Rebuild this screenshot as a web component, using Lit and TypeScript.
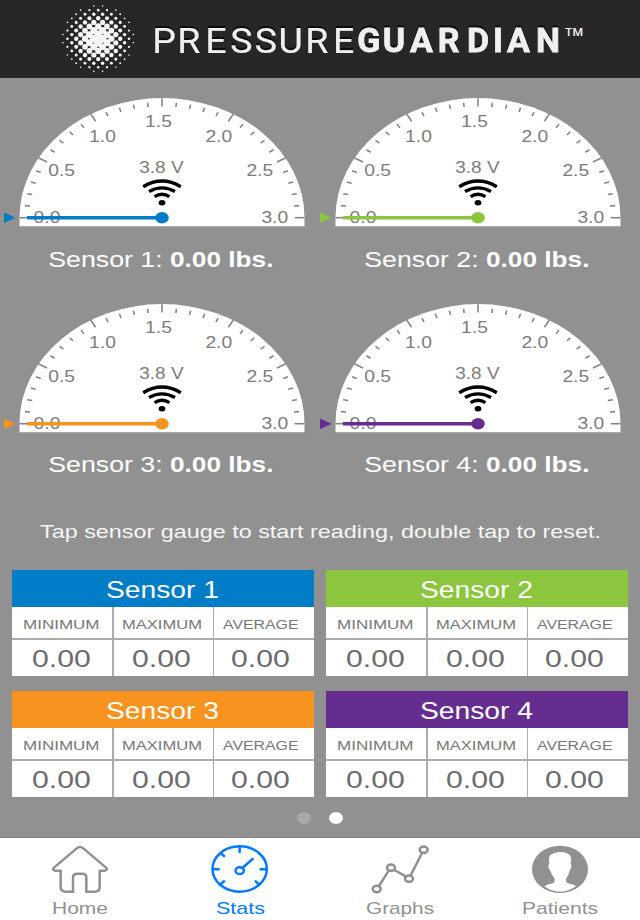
import { LitElement, html, svg, css } from "lit";
import { customElement, property } from "lit/decorators.js";

type Sensor = { id: number; color: string };

const SENSORS: Sensor[] = [
  { id: 1, color: "#007dc6" },
  { id: 2, color: "#8cc63e" },
  { id: 3, color: "#f7931e" },
  { id: 4, color: "#662d91" },
];

/* One line of extended-width text; `base` is the baseline inside the box. */
const wide = (text: string, size: number, width: number, height: number, base: number) => html`
  <svg class="wide" width=${width} height=${height}>
    <text x="0" y=${base} font-size=${size} textLength=${width} lengthAdjust="spacingAndGlyphs">${text}</text>
  </svg>`;

const wideCss = css`
  .wide { display: block; overflow: visible; flex: none; }
  .wide text { fill: currentColor; }
`;

@customElement("brand-header")
class BrandHeader extends LitElement {
  static styles = css`
    :host { display: flex; height: 78px; background: #272727; }
    svg { display: block; }
    .dots { fill: #f7f5f6; }
    text { font-family: Roboto, sans-serif; fill: #f3eff1; }
    .words { filter: drop-shadow(0 -1.5px 0 #0c0c0c); }
    .thin { font-weight: 400; stroke: #f3eff1; stroke-width: 0.2; }
    .heavy { font-weight: 700; stroke: #f3eff1; stroke-width: 0.8; }
  `;
  render() {
    const dots = [];
    for (let j = -8; j <= 8; j++)
      for (let i = -8; i <= 8; i++) {
        const d = Math.hypot(i, j);
        if ((i + j) % 2 === 0 || d > 8.1) continue;
        dots.push(svg`<circle cx=${98.2 + i * 4.4} cy=${38.7 + j * 4.08} r=${(4.5 - d * 0.46).toFixed(2)} />`);
      }
    const k = 1.09;
    const thinX = [152.2, 177.2, 205.2, 230.2, 254.8, 278.6, 305.2, 333].map((x) => (x / k).toFixed(2)).join(" ");
    return html`<svg width="640" height="78">
      <g class="dots">${dots}<circle cx="98.2" cy="38.7" r="3" /></g>
      <g class="words">
        <text class="thin" transform="scale(${k} 1)" y="52.6" font-size="34.4" x=${thinX}>PRESSURE</text>
        <text class="heavy" y="52.4" font-size="34" x="357.2 382.8 410 437.8 467 493 507 536">GUARDIAN</text>
      </g>
      <text x="565" y="36" font-size="11" font-weight="500" textLength="18" lengthAdjust="spacingAndGlyphs">TM</text>
    </svg>`;
  }
}

@customElement("sensor-gauge")
class SensorGauge extends LitElement {
  @property({ attribute: false }) sensor!: Sensor;
  static styles = css`
    :host { display: block; }
    svg { display: block; overflow: visible; }
    .face { fill: #fff; }
    .ticks { stroke: #858585; stroke-width: 1.6; }
    .scale { fill: #7c7c7c; font-size: 15.8px; }
    .wifi { fill: none; stroke: #000; stroke-width: 3.4; }
    .reading { color: #fff; margin-top: 6px; }
    .reading text { fill: #fff; font-size: 21.4px; }
    .bold { font-weight: 700; }
    :host(.lower) .reading { margin-top: 4.3px; }
  `;
  render() {
    const c = this.sensor.color;
    const ticks = [];
    for (let k = 0; k <= 30; k++) {
      const a = (k * 6 * Math.PI) / 180;
      const out = k % 5 ? 115.6 : 119.5;
      const x = -Math.cos(a) * 1.1925, y = -Math.sin(a);
      ticks.push(svg`<line x1=${x * 111.3} y1=${y * 111.3} x2=${x * out} y2=${y * out} />`);
    }
    const marks: [string, number, number][] = [
      ["0.0", -128.4, 5.4], ["0.5", -113.8, -41.8], ["1.0", -72.9, -75.8], ["1.5", -16.9, -91],
      ["2.0", 43.4, -75.8], ["2.5", 84.4, -41.8], ["3.0", 99.4, 5.4],
    ];
    return html`
      <svg width="316" height="160">
        <g transform="translate(162 139.7)">
          <path class="face" d="M-142.5 8.6V0A142.5 119.6 0 0 1 142.5 0V8.6Z" />
          <g class="ticks">${ticks}</g>
          <g class="scale">
            ${marks.map(([t, x, y]) => svg`<text x=${x} y=${y} textLength="26.8" lengthAdjust="spacingAndGlyphs">${t}</text>`)}
            <text x="-22.8" y="-45" textLength="44.4" lengthAdjust="spacingAndGlyphs">3.8 V</text>
          </g>
          <g class="wifi">
            <path d="M-18.8-31Q0-42.4 18.8-31" />
            <path d="M-13-26.1Q0-33.5 13-26.1" />
            <path d="M-7.4-21.1Q0-26 7.4-21.1" />
          </g>
          <ellipse cy="-15" rx="3.4" ry="2.7" />
          <g fill=${c}>
            <path d="M-158-5.3L-146.4 0L-158 5.3Z" />
            <path d="M-135-1.7H0V1.7H-135Z" />
            <ellipse rx="6.8" ry="5.7" />
          </g>
        </g>
      </svg>
      <svg class="reading" width="316" height="30">
        <text x="48.2" y="23" textLength="114.5" lengthAdjust="spacingAndGlyphs">Sensor ${this.sensor.id}:</text>
        <text class="bold" x="170" y="23" textLength="103.5" lengthAdjust="spacingAndGlyphs">0.00 lbs.</text>
      </svg>`;
  }
}

@customElement("sensor-table")
class SensorTable extends LitElement {
  @property({ attribute: false }) sensor!: Sensor;
  static styles = [wideCss, css`
    :host { display: block; width: 302px; }
    .title { height: 37px; display: flex; justify-content: center; color: #fff; padding-right: 2px; }
    .grid {
      display: grid; grid-template-columns: 99.8px 99px 1fr; grid-template-rows: 31.2px 36px;
      gap: 1.8px; background: #acacac; color: #777;
    }
    .cell { background: #fff; display: flex; justify-content: center; box-sizing: border-box; padding-right: 1px; }
    .cell.mid { padding-right: 3px; }
    .cell.end { padding-right: 7px; }
    .value { color: #6c6c6e; }
  `];
  render() {
    const cls = ["", "mid", "end"];
    return html`
      <div class="title" style="background:${this.sensor.color}">${wide(`Sensor ${this.sensor.id}`, 24.2, 113, 37, 28.3)}</div>
      <div class="grid">
        ${["MINIMUM", "MAXIMUM", "AVERAGE"].map((t, i) => html`<div class="cell ${cls[i]}">${wide(t, 13.4, [76.5, 80, 75.5][i], 31, 22.3)}</div>`)}
        ${cls.map((k) => html`<div class="cell value ${k}">${wide("0.00", 24.8, 58.8, 36, 26.6)}</div>`)}
      </div>`;
  }
}

@customElement("tab-bar")
class TabBar extends LitElement {
  static styles = [wideCss, css`
    :host { display: grid; grid-template-columns: repeat(4, 160px); height: 82px; background: #fff; }
    .tab { display: flex; flex-direction: column; align-items: center; padding-top: 6px; color: #919191; }
    .tab.on { color: #007aff; }
    .icon { display: block; fill: none; stroke: currentColor; stroke-width: 7.5; stroke-linecap: round; stroke-linejoin: round; }
    .solid { fill: currentColor; stroke: none; }
    .bust { fill: #fff; stroke: none; }
  `];
  render() {
    const icon = (x: number, body: unknown) => html`<svg class="icon" width="60" height="51" viewBox="${x} 42 180 153">${body}</svg>`;
    const home = svg`<path d="M220 185H198Q182 185 182 172V122H166Q154 120 163 112L229 56Q240 46 251 56L317 112Q326 120 314 122H299V172Q299 185 284 185H259V143Q259 131.5 247 131.5H232Q219 131.5 219 143V185Z" />`;
    const stats = svg`<ellipse cx="718" cy="117" rx="81.5" ry="68" />
      <path d="M718 50V66M637 118H655M781 118H799M661 70L671 78M659 164L671 154M777 164L766 154M726 114L757 87" />
      <ellipse cx="718" cy="122" rx="12.5" ry="10" />`;
    const graphs = svg`<ellipse cx="172" cy="177" rx="12" ry="9.5" /><ellipse cx="215" cy="113" rx="12" ry="9.5" />
      <ellipse cx="269" cy="146" rx="12" ry="9.5" /><ellipse cx="313" cy="59" rx="12" ry="9.5" />
      <path d="M179 168L208 122M225 120L259 139M274 136L308 69" />`;
    const patients = svg`<ellipse class="solid" cx="720" cy="118" rx="84" ry="71" />
      <path class="bust" d="M673 169Q684 162 700 160Q706 155 704 146Q695 134 691 122Q686 119 685 107Q686 103 688 102Q684 82 692 74Q704 66 720 66Q740 66 749 75Q756 85 752 102Q755 104 754 109Q752 120 749 122Q745 137 738 147Q737 156 743 160Q758 162 769 168Q746 185 720 185Q694 185 673 169Z" />`;
    return html`
      <div class="tab">${icon(150, home)}${wide("Home", 17, 56, 22, 19)}</div>
      <div class="tab on">${icon(629, stats)}${wide("Stats", 17, 49, 22, 19)}</div>
      <div class="tab">${icon(152, graphs)}${wide("Graphs", 17, 68, 22, 19)}</div>
      <div class="tab">${icon(630, patients)}${wide("Patients", 17, 76, 22, 19)}</div>`;
  }
}

@customElement("app-root")
class AppRoot extends LitElement {
  static styles = [wideCss, css`
    :host {
      display: flex; flex-direction: column; width: 640px; height: 920px; overflow: hidden;
      background: #919191; font-family: "Liberation Sans", Arial, sans-serif;
    }
    .body { height: 760px; box-sizing: border-box; border-bottom: 1px solid #858585; display: flex; flex-direction: column; }
    .gauges { display: grid; grid-template-columns: 316px 316px; grid-template-rows: 196px 195px; row-gap: 10.3px; }
    .hint { display: flex; justify-content: center; color: #f6f6f6; height: 30px; margin-top: 36.4px; }
    .tables { display: grid; grid-template-columns: 302px 302px; gap: 15px 12px; padding: 0 12px; margin-top: 24.3px; }
    .pager { display: flex; justify-content: center; gap: 18px; margin-top: 15px; }
    .dot { width: 14px; height: 12px; border-radius: 50%; background: #a9a9a9; }
    .dot.on { background: #fff; }
  `];
  render() {
    return html`
      <brand-header></brand-header>
      <div class="body">
        <div class="gauges">${SENSORS.map((s) => html`<sensor-gauge class=${s.id > 2 ? "lower" : ""} .sensor=${s}></sensor-gauge>`)}</div>
        <div class="hint">${wide("Tap sensor gauge to start reading, double tap to reset.", 18.6, 561, 30, 22)}</div>
        <div class="tables">${SENSORS.map((s) => html`<sensor-table .sensor=${s}></sensor-table>`)}</div>
        <div class="pager"><span class="dot"></span><span class="dot on"></span></div>
      </div>
      <tab-bar></tab-bar>`;
  }
}
